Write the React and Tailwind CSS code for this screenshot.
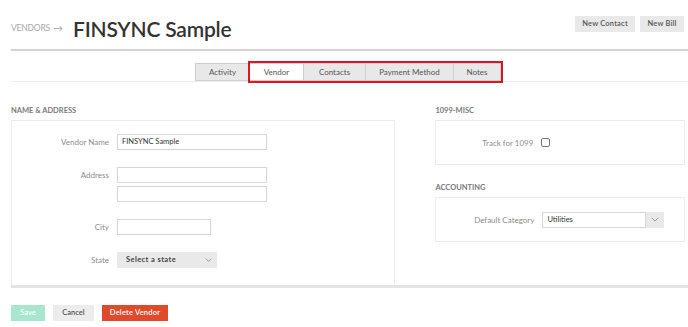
import React from 'react';

const font = { fontFamily: 'Lato, "Open Sans", sans-serif' };

const tabs = ['Vendor', 'Contacts', 'Payment Method', 'Notes'];
const tabWidths = { Vendor: 'w-[54px]', Contacts: 'w-[62px]', 'Payment Method': 'w-[88px]', Notes: 'w-[47px]' };

const Chevron = ({ className }) => (
    <svg viewBox="0 0 10 6" className={className} fill="none" stroke="currentColor" strokeWidth="1">
        <path d="M1 1l4 4 4-4" />
    </svg>
);

const Field = ({ label, children }) => (
    <div className="flex items-start">
        <div className="w-[105px] pr-[8px] text-right text-[8px] text-[#8c8c8c] leading-[16px]">{label}</div>
        <div className="flex flex-col gap-[3px]">{children}</div>
    </div>
);

const TextBox = ({ value, width = 'w-[150px]' }) => (
    <div className={`${width} h-[16px] border border-[#d6d6d6] bg-white px-[4px] text-[7.5px] leading-[14px] text-[#333]`}>
        {value}
    </div>
);

export default function App() {
    return (
        <div className="w-[688px] h-[327px] bg-white pl-[11px] overflow-hidden" style={font}>
            {/* header */}
            <div className="h-[51px] border-b-2 border-[#d4d4d4] flex items-center justify-between pr-[4px]">
                <div className="flex items-center pt-[7px]">
                    <span className="text-[8.5px] text-[#a9a9a9] tracking-[-0.2px]">VENDORS</span>
                    <span className="text-[10px] text-[#a9a9a9] ml-[3px] mr-[10px]">→</span>
                    <h1 className="text-[21px] font-semibold text-[#333] leading-none tracking-[-0.2px]">FINSYNC Sample</h1>
                </div>
                <div className="flex gap-[5px] pb-[2px]">
                    <button className="w-[60px] h-[16px] bg-[#e9e9e9] text-[7.5px] font-semibold text-[#555] tracking-[0.2px]">New Contact</button>
                    <button className="w-[44px] h-[16px] bg-[#e9e9e9] text-[7.5px] font-semibold text-[#555] tracking-[0.2px]">New Bill</button>
                </div>
            </div>

            {/* tabs */}
            <div className="mt-[12px] border-b border-[#eeeeee] flex justify-center pr-[3px]">
                <div className="flex">
                    <div className="w-[55px] h-[18px] bg-[#e8e8e8] border border-[#cfcfcf] flex items-center justify-center text-[8px] text-[#555]">Activity</div>
                    <div className="flex outline-2 outline-[#e0141e]">
                        {tabs.map(t => (
                            <div
                                key={t}
                                className={`${tabWidths[t]} h-[18px] border border-l-0 border-[#cfcfcf] flex items-center justify-center text-[8px] text-[#555] ${t === 'Vendor' ? 'bg-white' : 'bg-[#e8e8e8]'}`}
                            >
                                {t}
                            </div>
                        ))}
                    </div>
                </div>
            </div>

            {/* content */}
            <div className="flex gap-[40px] border-b-[3px] border-[#e4e4e4] pr-[3px]">
                <div className="w-[385px] flex flex-col">
                    <div className="h-[38px] flex items-end pb-[4px] text-[7.5px] font-bold text-[#7a7a7a]">NAME &amp; ADDRESS</div>
                    <div className="h-[165px] border border-b-0 border-[#ececec] pt-[13px] flex flex-col">
                        <Field label="Vendor Name"><TextBox value="FINSYNC Sample" /></Field>
                        <div className="h-[17px]" />
                        <Field label="Address">
                            <TextBox value="" />
                            <TextBox value="" />
                        </Field>
                        <div className="h-[17px]" />
                        <Field label="City"><TextBox value="" width="w-[94px]" /></Field>
                        <div className="h-[17px]" />
                        <Field label="State">
                            <div className="w-[100px] h-[16px] bg-[#e9e9e9] flex items-center justify-between pl-[9px] pr-[5px]">
                                <span className="text-[7.5px] font-bold text-[#444] tracking-[0.4px]">Select a state</span>
                                <Chevron className="w-[7px] h-[4px] text-[#777]" />
                            </div>
                        </Field>
                    </div>
                </div>

                <div className="w-[250px] flex flex-col">
                    <div className="h-[38px] flex items-end pb-[4px] text-[7.5px] font-bold text-[#7a7a7a]">1099-MISC</div>
                    <div className="h-[45px] border border-[#ececec] flex items-center">
                        <div className="w-[105px] pr-[8px] text-right text-[8px] text-[#8c8c8c]">Track for 1099</div>
                        <div className="w-[9px] h-[9px] border border-[#777] rounded-[2px]" />
                    </div>
                    <div className="h-[32px] flex items-end pb-[4px] text-[7.5px] font-bold text-[#7a7a7a]">ACCOUNTING</div>
                    <div className="h-[45px] border border-[#ececec] flex items-center">
                        <div className="w-[106px] pr-[8px] text-right text-[8px] text-[#8c8c8c]">Default Category</div>
                        <div className="flex">
                            <div className="w-[104px] h-[16px] border border-[#d6d6d6] px-[4px] text-[7.5px] leading-[14px] text-[#333]">Utilities</div>
                            <div className="w-[18px] h-[16px] bg-[#e9e9e9] flex items-center justify-center">
                                <Chevron className="w-[8px] h-[5px] text-[#888]" />
                            </div>
                        </div>
                    </div>
                </div>
            </div>

            {/* footer buttons */}
            <div className="mt-[17px] flex gap-[8px]">
                <button className="w-[34px] h-[16px] bg-[#a8e6cf] text-[7.5px] font-semibold text-white">Save</button>
                <button className="w-[41px] h-[16px] bg-[#ececec] text-[7.5px] font-semibold text-[#555]">Cancel</button>
                <button className="w-[66px] h-[16px] bg-[#e04a2b] text-[7.5px] font-semibold text-white tracking-[0.2px]">Delete Vendor</button>
            </div>
        </div>
    );
}
